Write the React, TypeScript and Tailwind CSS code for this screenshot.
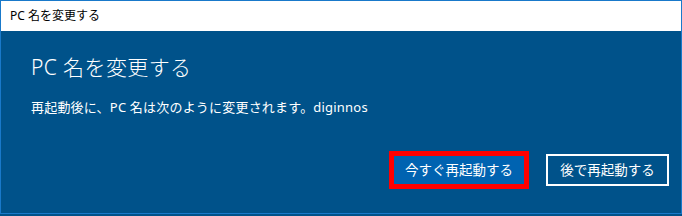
export default function App() {
    return (
        <div className="w-[682px] h-[216px] bg-[#00528a] font-['Noto_Sans','Noto_Sans_CJK_JP',sans-serif]">
            <div className="flex flex-col w-full h-[214px] border border-[#1979ca]">
                {/* タイトルバー */}
                <div className="h-[30px] bg-white flex items-center pl-[9px] text-[12px] text-black">
                    PC 名を変更する
                </div>

                {/* 本体 */}
                <div className="flex-1 bg-[#00528a] flex flex-col text-white">
                    <div className="pl-[30px] pt-[22px]">
                        <h1 className="text-[21px] leading-[28px] font-light tracking-[0.4px]">PC 名を変更する</h1>
                        <p className="mt-[16px] text-[13px] leading-[20px] tracking-[0.2px]">再起動後に、PC 名は次のように変更されます。diginnos</p>
                    </div>

                    <div className="flex justify-end items-center gap-[17px] pr-[12px] mt-[34px]">
                        <div className="border-[5px] border-[#ff0000]">
                            <button className="w-[130px] h-[28px] bg-[#0063b1] text-[13.5px] text-white">今すぐ再起動する</button>
                        </div>
                        <button className="w-[123px] h-[32px] border-2 border-white text-[13.5px] text-white">後で再起動する</button>
                    </div>
                </div>
            </div>
        </div>
    );
}
